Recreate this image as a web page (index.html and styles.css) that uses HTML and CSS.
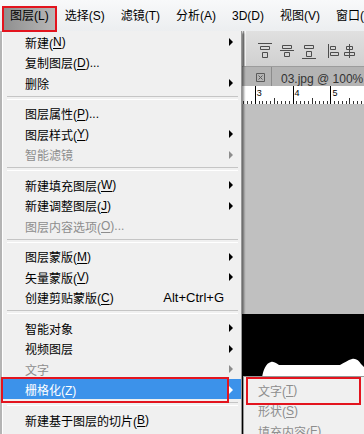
FILE: index.html
```html
<!DOCTYPE html>
<html lang="zh-CN">
<head>
  <meta charset="UTF-8">
  <title>图层菜单</title>
  <link rel="stylesheet" href="styles.css">
</head>
<body>
<div class="screen">
  <div class="menubar">
    <span class="mb-item open">图层(L)</span>
    <span class="mb-item">选择(S)</span>
    <span class="mb-item">滤镜(T)</span>
    <span class="mb-item">分析(A)</span>
    <span class="mb-item">3D(D)</span>
    <span class="mb-item">视图(V)</span>
    <span class="mb-item">窗口(W)</span>
  </div>

  <div class="options">
    <span class="grip"></span>
    <svg class="align" width="109" height="16" viewBox="0 0 109 16" fill="none" stroke="#4d4d4d">
      <path d="M3 .5h14M5.5 3.5h9v3h-9zM7.5 9.5h5v5h-5z"/>
      <path d="M25 7.5h14M27.5 2.5h9v3h-9zM29.5 9.5h5v4h-5z"/>
      <path d="M47 15.5h14M49.5 2.5h9v3h-9zM51.5 8.5h5v5h-5z"/>
      <path d="M73.5 1v14M75.5 3.5h5v3h-5zM75.5 9.5h8v3h-8z"/>
      <path d="M94.5 1v14M91.5 3.5h6v3h-6zM89.5 9.5h10v3h-10z"/>
    </svg>
  </div>

  <div class="tabs">
    <svg class="tab-close" width="9" height="9" viewBox="0 0 9 9" fill="none" stroke="#5a5a5a">
      <path d="M.5 .5h8v8h-8zM2.5 2.5l4 4M6.5 2.5l-4 4"/>
    </svg>
    <span class="tab">03.jpg @ 100% (图层 1, RGB/8)</span>
  </div>

  <div class="ruler">
    <span class="cm">2</span>
    <span class="cm">3</span>
    <span class="cm">4</span>
    <span class="cm">5</span>
  </div>

  <div class="canvas">
    <div class="photo">
      <svg width="364" height="120" viewBox="0 0 364 120">
        <path fill="#fff" d="M262 64C263 56 266 49 271 48C274 47 277 50 279 51L340 51C344 49 348 46 352 45C356 44 359 47 361 50L364 53L364 120L262 120Z"/>
      </svg>
    </div>
  </div>

  <div class="menu">
    <div class="item sub">新建(<u>N</u>)</div>
    <div class="item">复制图层(<u>D</u>)...</div>
    <div class="item sub">删除</div>
    <div class="sep"></div>
    <div class="item">图层属性(<u>P</u>)...</div>
    <div class="item sub">图层样式(<u>Y</u>)</div>
    <div class="item sub off">智能滤镜</div>
    <div class="sep"></div>
    <div class="item sub">新建填充图层(<u>W</u>)</div>
    <div class="item sub">新建调整图层(<u>J</u>)</div>
    <div class="item off">图层内容选项(<u>O</u>)...</div>
    <div class="sep"></div>
    <div class="item sub">图层蒙版(<u>M</u>)</div>
    <div class="item sub">矢量蒙版(<u>V</u>)</div>
    <div class="item">创建剪贴蒙版(<u>C</u>)<span class="key">Alt+Ctrl+G</span></div>
    <div class="sep"></div>
    <div class="item sub">智能对象</div>
    <div class="item sub">视频图层</div>
    <div class="item sub off">文字</div>
    <div class="item sub on marked">栅格化(Z)</div>
    <div class="sep"></div>
    <div class="item">新建基于图层的切片(<u>B</u>)</div>
  </div>

  <div class="submenu">
    <div class="item off marked">文字(<u>T</u>)</div>
    <div class="item off">形状(<u>S</u>)</div>
    <div class="item off">填充内容(<u>F</u>)</div>
  </div>
</div>
</body>
</html>
```

FILE: styles.css
```css
* {
  box-sizing: border-box;
}
body {
  margin: 0;
  font-family: "Liberation Sans", "Noto Sans CJK SC", sans-serif;
  font-size: 12px;
  color: #000;
  background: #c0c0c0;
}
.screen {
  position: relative;
  width: 364px;
  height: 434px;
  overflow: hidden;
  display: flex;
  flex-direction: column;
}

/* top menu bar */
.menubar {
  flex: none;
  display: flex;
  height: 31px;
  padding-left: 2px;
  background: linear-gradient(#f8f9fa, #eceef0);
  position: relative;
  z-index: 3;
}
.mb-item {
  margin-top: 8px;
  height: 22px;
  padding: 0 8px;
  line-height: 17px;
  white-space: nowrap;
}
.mb-item.open {
  position: relative;
  background: linear-gradient(to right, #8e8e8e, #b9b9b9);
}
.mb-item.open::after {
  content: "";
  position: absolute;
  left: 0;
  right: 0;
  top: -2px;
  bottom: -2px;
  border: 2px solid #e3141e;
}

/* options bar */
.options {
  flex: none;
  display: flex;
  align-items: flex-start;
  height: 35px;
  padding-left: 243px;
  background: linear-gradient(#e0e0e0, #d0d0d0);
}
.grip {
  flex: none;
  width: 3px;
  height: 35px;
  border-left: 1px solid #9a9a9a;
  border-right: 1px solid #f6f6f6;
}
.align {
  flex: none;
  margin: 12px 0 0 9px;
}

/* document tabs */
.tabs {
  flex: none;
  display: flex;
  height: 20px;
  padding-left: 256px;
  background: #b4b4b4;
  border-top: 1px solid #9c9c9c;
}
.tab-close {
  flex: none;
  margin: 6px 6px 0 0;
}
.tab {
  flex: none;
  border-left: 1px solid #8c8c8c;
  padding: 5px 0 0 9px;
  line-height: 14px;
  color: #333;
  white-space: nowrap;
}

/* ruler */
.ruler {
  flex: none;
  display: flex;
  height: 18px;
  padding-left: 217px;
  background:
    repeating-linear-gradient(90deg, #333 0 1px, transparent 1px 18.9px) 217px 100% / 100% 6px no-repeat,
    repeating-linear-gradient(90deg, #333 0 1px, transparent 1px 3.78px) 217px 100% / 100% 3px no-repeat,
    #fff;
}
.cm {
  flex: none;
  width: 37.8px;
  border-left: 1px solid #000;
  padding: 2px 0 0 1px;
  font-size: 9px;
  line-height: 10px;
}

/* canvas */
.canvas {
  flex: 1;
  padding-top: 210px;
  background: #c0c0c0;
}
.photo {
  height: 120px;
  background: #000;
}
.photo svg {
  display: block;
}

/* dropdown menu */
.menu {
  position: absolute;
  left: 0;
  top: 31px;
  width: 242px;
  height: 410px;
  background: #f0f0f0;
  border-left: 2px solid #b4b4b4;
  border-right: 1px solid #979797;
  box-shadow: inset 1px 0 #fff, 2px 2px 2px rgba(0, 0, 0, .45);
  z-index: 2;
}
.item {
  position: relative;
  display: flex;
  align-items: center;
  height: 20.5px;
  padding: 2px 8px 0 23px;
  white-space: nowrap;
}
.item u {
  text-decoration-thickness: 1px;
  text-underline-offset: 2px;
}
.item.sub::after {
  content: "";
  margin-left: auto;
  border-left: 4px solid #000;
  border-top: 4px solid transparent;
  border-bottom: 4px solid transparent;
}
.item.off {
  color: #8d8d8d;
}
.item.off.sub::after {
  border-left-color: #8d8d8d;
}
.item.on {
  background: #3c92ea;
  color: #fff;
}
.item.on.sub::after {
  border-left-color: #fff;
}
.menu .item.marked::before {
  content: "";
  position: absolute;
  left: -1px;
  top: -1.5px;
  width: 224px;
  height: 22px;
  border: 2px solid #e3141e;
}
.key {
  margin: 0 9px 0 auto;
  font-size: 13px;
}
.sep {
  display: flex;
  align-items: center;
  height: 10px;
  margin: 0 3px 0 5px;
}
.sep::before {
  content: "";
  flex: 1;
  height: 2px;
  border-top: 1px solid #c5c5c5;
  border-bottom: 1px solid #fff;
}

/* submenu */
.submenu {
  position: absolute;
  left: 243px;
  top: 376px;
  width: 140px;
  height: 70px;
  padding-top: 2px;
  background: #f0f0f0;
  border: 1px solid #979797;
  z-index: 2;
}
.submenu .item {
  padding-left: 14px;
}
.submenu .item.marked::before {
  content: "";
  position: absolute;
  left: 2px;
  top: -2px;
  width: 111px;
  height: 24px;
  border: 2px solid #e3141e;
}
```
